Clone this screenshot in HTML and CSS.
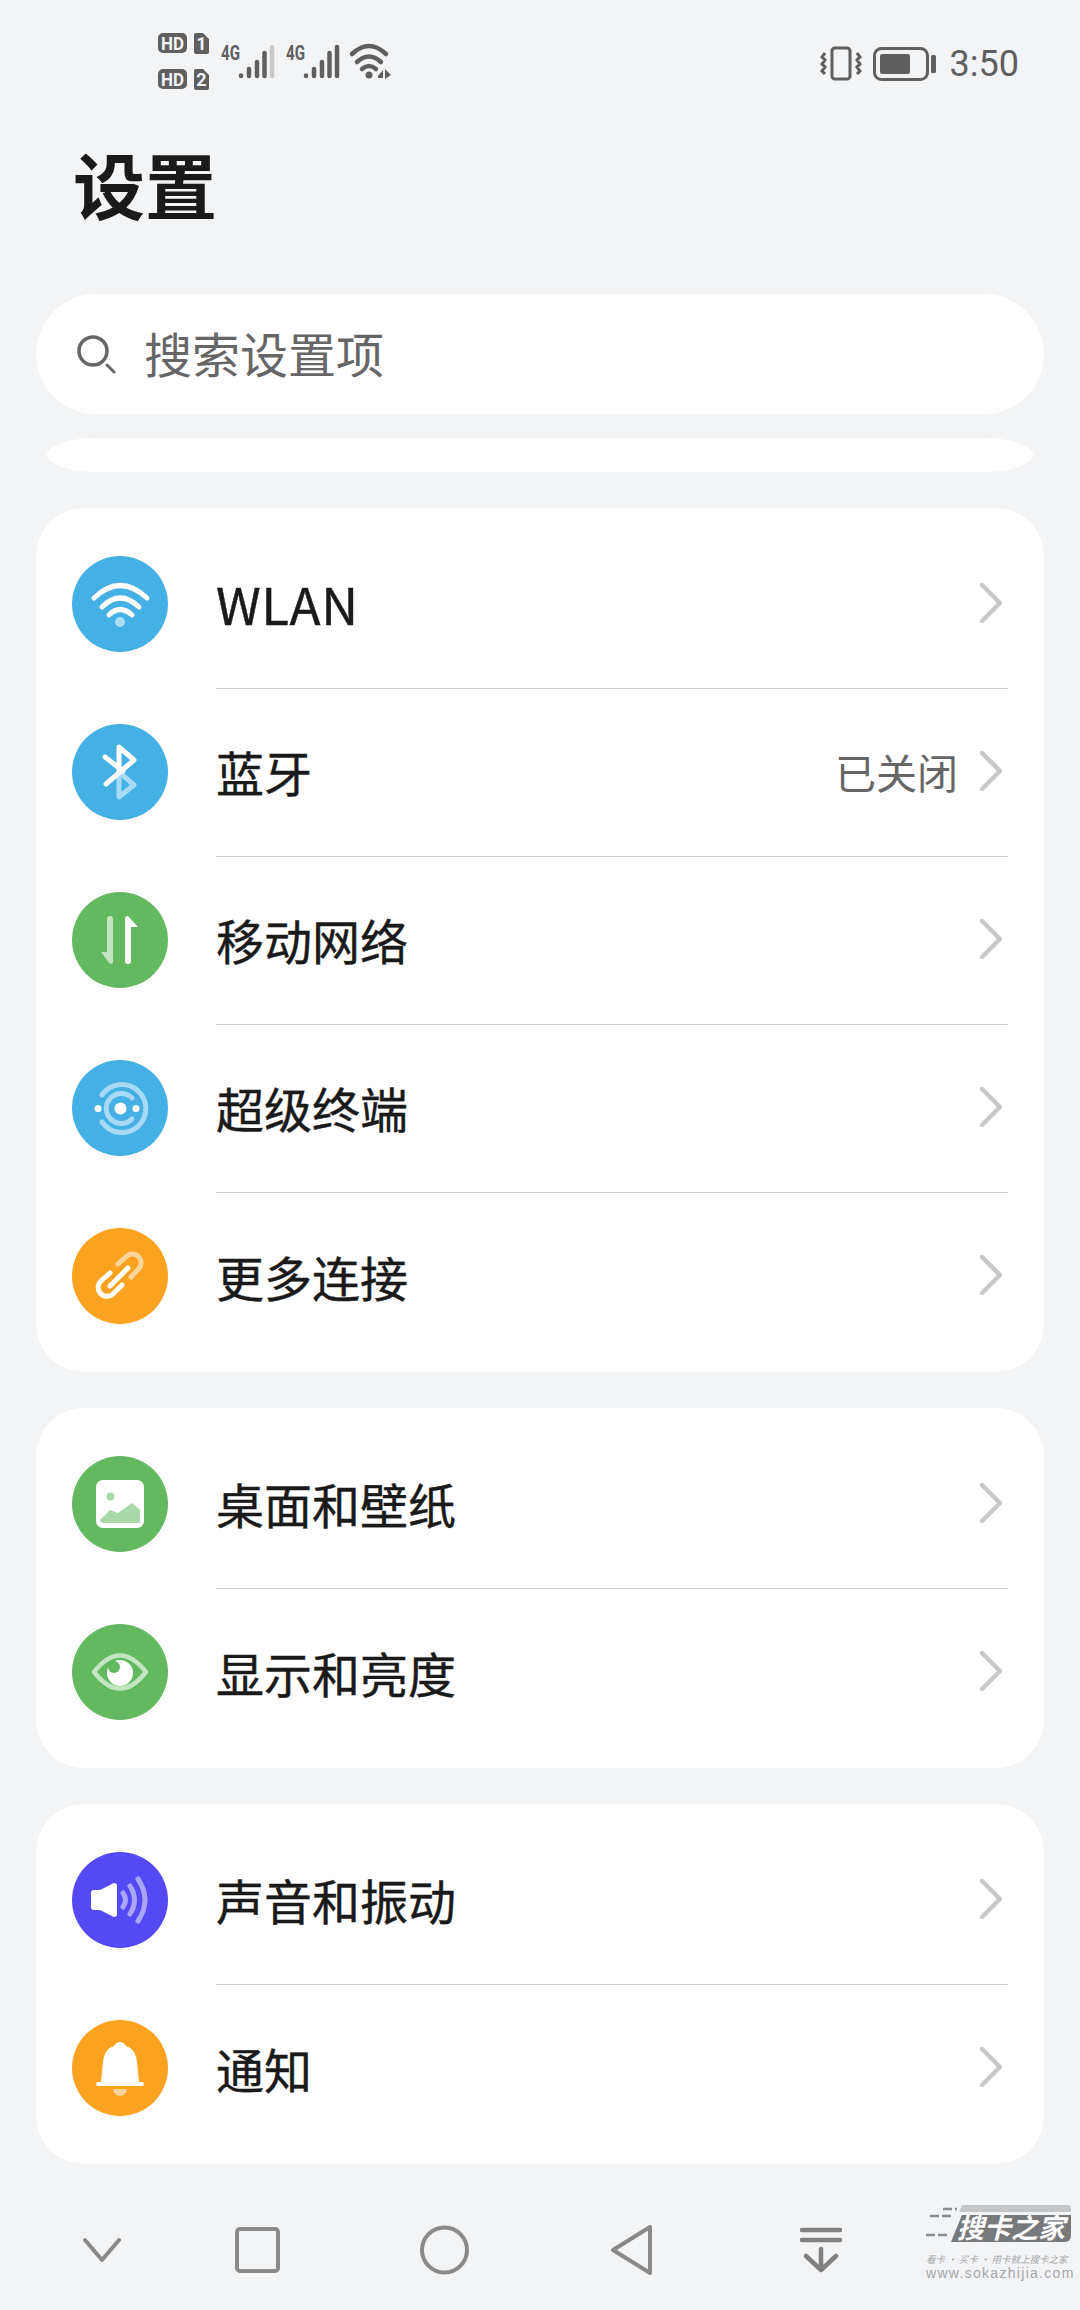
FILE: index.html
```html
<!DOCTYPE html>
<html lang="zh-CN">
<head>
    <meta charset="UTF-8">
    <meta name="viewport" content="width=device-width, initial-scale=1.0">
    <title>设置</title>
    <link rel="stylesheet" href="styles.css">
</head>
<body>
    <div class="statusbar">
        <svg class="status-left" width="260" height="60" viewBox="158 30 260 60">
            <rect x="158" y="33" width="29" height="20" rx="5" fill="#5f5f5f"/>
            <text x="161" y="49.500" class="hd" textLength="23" lengthAdjust="spacingAndGlyphs">HD</text>
            <path d="M196 33h7l6 6v13a2 2 0 0 1-2 2h-11a2 2 0 0 1-2-2V35a2 2 0 0 1 2-2z" fill="#5f5f5f"/>
            <text x="201.500" y="49.500" class="hd" text-anchor="middle">1</text>
            <rect x="158" y="69" width="29" height="20" rx="5" fill="#5f5f5f"/>
            <text x="161" y="85.500" class="hd" textLength="23" lengthAdjust="spacingAndGlyphs">HD</text>
            <path d="M196 69h7l6 6v13a2 2 0 0 1-2 2h-11a2 2 0 0 1-2-2V71a2 2 0 0 1 2-2z" fill="#5f5f5f"/>
            <text x="201.500" y="85.500" class="hd" text-anchor="middle">2</text>

            <text x="221" y="60" class="net" textLength="19" lengthAdjust="spacingAndGlyphs">4G</text>
            <g stroke="#5f5f5f" stroke-width="4.500" stroke-linecap="round">
                <path d="M241 75.500v.5M249 69v7M257 62v14M264.500 53v23"/>
                <path d="M272 47v29" stroke="#c8c8c8"/>
            </g>
            <text x="286" y="60" class="net" textLength="19" lengthAdjust="spacingAndGlyphs">4G</text>
            <g stroke="#5f5f5f" stroke-width="4.500" stroke-linecap="round">
                <path d="M306 75.500v.5M314 69v7M322 62v14M329.500 53v23M337 47v29"/>
            </g>
            <g fill="none" stroke="#5f5f5f" stroke-width="4.500" stroke-linecap="round">
                <path d="M352 54Q369 38 386 54M357 62Q369 51 381 62M362 69Q369 63 376 69"/>
            </g>
            <circle cx="369" cy="75" r="3.500" fill="#5f5f5f"/>
            <path d="M378 76l5-6v8h-5zM385 69l6 6-6 4z" fill="#5f5f5f"/>
        </svg>
        <div class="status-right">
            <svg width="42" height="36" viewBox="0 0 42 36" fill="none" stroke="#5f5f5f">
                <rect x="12" y="2" width="18" height="31" rx="3" stroke-width="3"/>
                <path d="M5 7L2 11l3 3-3 4 3 3-3 4 3 3M37 7l3 4-3 3 3 4-3 3 3 4-3 3" stroke-width="3"/>
            </svg>
            <svg class="battery" width="64" height="34" viewBox="0 0 64 34">
                <rect x="1.500" y="1.500" width="53" height="31" rx="7" fill="none" stroke="#5f5f5f" stroke-width="3"/>
                <rect x="7" y="7" width="30" height="20" rx="2" fill="#5f5f5f"/>
                <rect x="58" y="8" width="5" height="18" rx="1.500" fill="#5f5f5f"/>
            </svg>
            <span class="time">3:50</span>
        </div>
    </div>

    <h1 class="title">设置</h1>

    <div class="search">
        <svg width="40" height="40" viewBox="0 0 40 40" fill="none" stroke="#666" stroke-linecap="round">
            <circle cx="17" cy="17" r="14" stroke-width="3.500"/>
            <path d="M31 31l7 7" stroke-width="3"/>
        </svg>
        <span>搜索设置项</span>
    </div>
    <div class="sliver"></div>

    <div class="card">
        <div class="row">
            <svg class="icon" viewBox="0 0 96 96">
                <circle cx="48" cy="48" r="48" fill="#45b0e3"/>
                <g fill="none" stroke="#fff" stroke-width="5" stroke-linecap="round">
                    <path d="M22 42Q48 17 75 42M30 51Q48 33 67 51M37 59Q48 48 60 59"/>
                </g>
                <circle cx="48" cy="66" r="5" fill="#aedcf6"/>
            </svg>
            <div class="row-body"><span class="label latin">WLAN</span><svg class="chevron" viewBox="0 0 22 40"><path d="M2 2l18 18L2 38"/></svg></div>
        </div>
        <div class="row">
            <svg class="icon" viewBox="0 0 96 96">
                <circle cx="48" cy="48" r="48" fill="#45b0e3"/>
                <path d="M47 48l15 13-15 12z" fill="none" stroke="#a8d9f6" stroke-width="5" stroke-linejoin="round"/>
                <g fill="none" stroke="#fff" stroke-width="5" stroke-linecap="round" stroke-linejoin="round">
                    <path d="M33 33l18 14M47 47V23l15 13-28 24"/>
                </g>
            </svg>
            <div class="row-body"><span class="label">蓝牙</span><span class="value">已关闭</span><svg class="chevron" viewBox="0 0 22 40"><path d="M2 2l18 18L2 38"/></svg></div>
        </div>
        <div class="row">
            <svg class="icon" viewBox="0 0 96 96">
                <circle cx="48" cy="48" r="48" fill="#62b95f"/>
                <path d="M35 27a3 3 0 0 1 6 0v44l-3 1-9-12h6z" fill="#c2e6c1"/>
                <path d="M53 27a3 3 0 0 1 3-3l10 11h-7v34a3 3 0 0 1-6 0z" fill="#fff"/>
            </svg>
            <div class="row-body"><span class="label">移动网络</span><svg class="chevron" viewBox="0 0 22 40"><path d="M2 2l18 18L2 38"/></svg></div>
        </div>
        <div class="row">
            <svg class="icon" viewBox="0 0 96 96">
                <circle cx="48" cy="48" r="48" fill="#45b0e3"/>
                <g fill="none" stroke="#a8d9f6" stroke-width="5" stroke-linecap="round">
                    <path d="M30 35A24 24 0 1 1 30 62"/>
                    <path d="M60 38A15 15 0 1 0 60 59"/>
                </g>
                <circle cx="48.500" cy="48.500" r="6" fill="#fff"/>
                <circle cx="26" cy="48.500" r="3.500" fill="#fff"/>
                <circle cx="64" cy="48.500" r="3.500" fill="#fff"/>
            </svg>
            <div class="row-body"><span class="label">超级终端</span><svg class="chevron" viewBox="0 0 22 40"><path d="M2 2l18 18L2 38"/></svg></div>
        </div>
        <div class="row">
            <svg class="icon" viewBox="0 0 96 96">
                <circle cx="48" cy="48" r="48" fill="#fba221"/>
                <g fill="none" stroke-width="5" stroke-linecap="round">
                    <path d="M46 36l9-8a8.700 8.700 0 0 1 12 12.500L59 49" stroke="#fdd49a"/>
                    <path d="M38 45l-9 8a8.700 8.700 0 0 0 12 13l9-9M38 58l18-18" stroke="#fff"/>
                </g>
            </svg>
            <div class="row-body"><span class="label">更多连接</span><svg class="chevron" viewBox="0 0 22 40"><path d="M2 2l18 18L2 38"/></svg></div>
        </div>
    </div>

    <div class="card">
        <div class="row">
            <svg class="icon" viewBox="0 0 96 96">
                <circle cx="48" cy="48" r="48" fill="#62b95f"/>
                <rect x="24" y="24" width="48" height="48" rx="7" fill="#fff"/>
                <circle cx="38.500" cy="40.500" r="4" fill="#a9d9a8"/>
                <path d="M28 64l10-10 8 3 14-10 8 7v13H33a4 4 0 0 1-5-3z" fill="#a9d9a8"/>
            </svg>
            <div class="row-body"><span class="label">桌面和壁纸</span><svg class="chevron" viewBox="0 0 22 40"><path d="M2 2l18 18L2 38"/></svg></div>
        </div>
        <div class="row">
            <svg class="icon" viewBox="0 0 96 96">
                <circle cx="48" cy="48" r="48" fill="#62b95f"/>
                <path d="M22 48Q48 15 74 48Q48 81 22 48z" fill="none" stroke="#c2e6c1" stroke-width="4.500" stroke-linejoin="round"/>
                <circle cx="48" cy="49" r="13" fill="#fff"/>
                <circle cx="42" cy="43" r="6" fill="#62b95f"/>
            </svg>
            <div class="row-body"><span class="label">显示和亮度</span><svg class="chevron" viewBox="0 0 22 40"><path d="M2 2l18 18L2 38"/></svg></div>
        </div>
    </div>

    <div class="card">
        <div class="row">
            <svg class="icon" viewBox="0 0 96 96">
                <circle cx="48" cy="48" r="48" fill="#5549f5"/>
                <path d="M22 38h6l14-7a3 3 0 0 1 3 3v28a3 3 0 0 1-3 3l-14-7h-6a3 3 0 0 1-3-3V41a3 3 0 0 1 3-3z" fill="#fff"/>
                <g fill="none" stroke="#aca6fb" stroke-width="5" stroke-linecap="round">
                    <path d="M51 41Q56 48 51 55M58 34Q67 48 58 62M66 27Q80 48 66 69"/>
                </g>
            </svg>
            <div class="row-body"><span class="label">声音和振动</span><svg class="chevron" viewBox="0 0 22 40"><path d="M2 2l18 18L2 38"/></svg></div>
        </div>
        <div class="row">
            <svg class="icon" viewBox="0 0 96 96">
                <circle cx="48" cy="48" r="48" fill="#fba221"/>
                <path d="M48 22c3 0 5 2 6 4 7 2 10 8 11 16l2 20h3a2 2 0 0 1 0 4H26a2 2 0 0 1 0-4h3l2-20c1-8 4-14 11-16 1-2 3-4 6-4z" fill="#fff"/>
                <path d="M41 69h14a7 7 0 0 1-14 0z" fill="#fdd49a"/>
            </svg>
            <div class="row-body"><span class="label">通知</span><svg class="chevron" viewBox="0 0 22 40"><path d="M2 2l18 18L2 38"/></svg></div>
        </div>
    </div>

    <div class="navbar">
        <svg class="nav-down" width="38" height="26" viewBox="0 0 38 26" fill="none" stroke="#8a8a8a" stroke-width="4" stroke-linecap="round" stroke-linejoin="round"><path d="M2 3l17 20L36 3"/></svg>
        <svg class="nav-square" width="45" height="46" viewBox="0 0 45 46" fill="none" stroke="#8a8a8a" stroke-width="4"><rect x="2" y="2" width="41" height="42" rx="3"/></svg>
        <svg class="nav-circle" width="49" height="50" viewBox="0 0 49 50" fill="none" stroke="#8a8a8a" stroke-width="4"><circle cx="24.500" cy="25" r="22.500"/></svg>
        <svg class="nav-back" width="43" height="50" viewBox="0 0 43 50" fill="none" stroke="#8a8a8a" stroke-width="4" stroke-linejoin="round"><path d="M3 25L40 2v46z"/></svg>
        <svg class="nav-notify" width="42" height="46" viewBox="0 0 42 46" fill="none" stroke="#808080" stroke-width="4.500" stroke-linecap="round" stroke-linejoin="round"><path d="M2 3h38M2 13h38M21 22v21M6 29l15 14 15-14"/></svg>
        <div class="watermark">
            <svg width="148" height="40" viewBox="0 0 148 40">
                <path d="M36 0h106a3 3 0 0 1 3 3v4H33z" fill="#c4c6c8"/>
                <path d="M36 10h109v21a6 6 0 0 1-6 6H25z" fill="#77797b"/>
                <path d="M17 4h14M4 11h24M0 30h24" stroke="#8a8c8e" stroke-width="2.500" stroke-dasharray="9 3"/>
                <text x="31" y="33" class="wm-logo">搜卡之家</text>
            </svg>
            <span class="wm-line">看卡 · 买卡 · 用卡就上搜卡之家</span>
            <span class="wm-url">www.sokazhijia.com</span>
        </div>
    </div>
</body>
</html>
```

FILE: styles.css
```css
html, body { margin: 0; height: 2310px; overflow: hidden; }
body { width: 1080px; background-color: #f3f4f6; color: #1a1a1a; font-family: "Noto Sans CJK SC", "Noto Sans", sans-serif; }

.statusbar { height: 120px; display: flex; justify-content: space-between; padding: 30px 61px 0 158px; box-sizing: border-box; align-items: flex-start; }
.status-left { display: block; }
.status-left .hd { font-family: "Roboto", sans-serif; font-weight: 700; font-size: 18px; fill: #f3f4f6; }
.status-left .net { font-family: "Roboto", sans-serif; font-weight: 700; font-size: 21px; fill: #5f5f5f; }
.status-right { display: flex; align-items: center; height: 68px; padding-left: 1px; }
.battery { margin-left: 11px; }
.time { font-family: "Roboto", sans-serif; font-size: 36px; color: #5f5f5f; margin-left: 13px; line-height: 1; }

.title { margin: 0 0 0 73px; height: 174px; font-size: 72px; font-weight: 700; line-height: 126px; }

.search { margin: 0 36px; height: 120px; border-radius: 60px; background: #fff; display: flex; align-items: center; padding-left: 40px; font-size: 48px; color: #666; }
.search svg { width: 40px; height: 40px; }
.search span { margin: 0 0 5px 28px; }

.sliver { margin: 24px 47px 36px; height: 34px; border-radius: 50px / 17px; background: #fff; }

.card { margin: 0 36px 36px; padding: 13px 0 11px; background: #fff; border-radius: 48px; }
.row { display: flex; align-items: center; height: 168px; padding-left: 36px; }
.icon { width: 96px; height: 96px; flex: none; margin-top: -3px; }
.row-body { flex: 1; height: 168px; box-sizing: border-box; margin: 0 36px 0 48px; display: flex; align-items: center; border-bottom: 1px solid #cfcfcf; }
.row:last-child .row-body { border-bottom: none; }
.label { flex: 1; font-size: 48px; line-height: 1; margin-bottom: 3px; -webkit-text-stroke: 0.4px #1a1a1a; }
.latin { font-size: 51px; letter-spacing: 0.5px; }
.value { font-size: 41px; color: #666; margin: 0 22px 3px 0; line-height: 1; }
.chevron { width: 22px; height: 40px; margin: 0 6px 4px 0; fill: none; stroke: #c8c8c8; stroke-width: 4.500; stroke-linecap: round; stroke-linejoin: round; }

.navbar { display: flex; align-items: center; height: 70px; margin-top: 51px; padding-left: 83px; }
.nav-square { margin-left: 114px; }
.nav-circle { margin-left: 140px; }
.nav-back { margin-left: 141px; }
.nav-notify { margin-left: 147px; }
.watermark { margin-left: 84px; width: 148px; display: flex; flex-direction: column; margin-top: -15px; color: #a4a6a8; }
.wm-logo { font-size: 27px; font-weight: 700; font-style: italic; fill: #fff; }
.wm-line { font-size: 9.500px; font-style: italic; line-height: 14px; margin-top: 7px; white-space: nowrap; }
.wm-url { font-family: "Liberation Sans", sans-serif; font-size: 14px; line-height: 15px; letter-spacing: 1.300px; white-space: nowrap; }
```
